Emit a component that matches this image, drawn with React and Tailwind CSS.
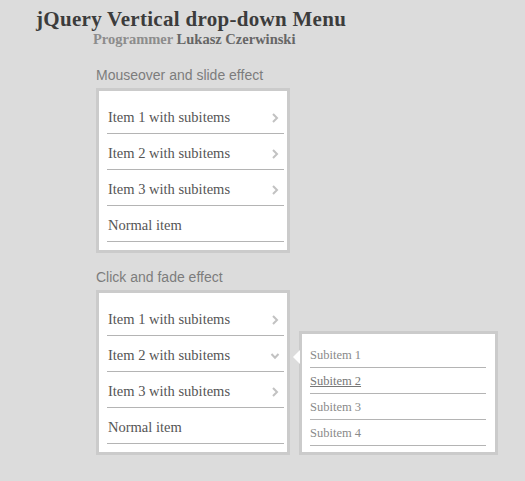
import React from 'react';

const serif = { fontFamily: '"Liberation Serif", "Times New Roman", serif' };
const sans = { fontFamily: '"Liberation Sans", Arial, sans-serif' };

const Chevron = ({ down = false }) => (
    <svg width="10" height="10" viewBox="0 0 10 10" className="shrink-0">
        {down ? (
            <polyline points="1.5,3 5,6.8 8.5,3" fill="none" stroke="#c2c2c2" strokeWidth="2" />
        ) : (
            <polyline points="3,1 7,5 3,9" fill="none" stroke="#c2c2c2" strokeWidth="2" />
        )}
    </svg>
);

const MenuItem = ({ label, icon }) => (
    <li className="flex items-center justify-between h-[36px] pt-[5px] border-b border-[#b4b4b4] pl-[1px] pr-[4px]">
        <span className="text-[14.5px] text-[#555]" style={serif}>{label}</span>
        {icon && <Chevron down={icon === 'down'} />}
    </li>
);

const Menu = ({ openSecond = false }) => (
    <div className="w-[194px] border-[3px] border-[#cbcbcb] bg-white">
        <ul className="pt-[7px] pb-[8px] pl-[8px] pr-[3px]">
            <MenuItem label="Item 1 with subitems" icon="right" />
            <MenuItem label="Item 2 with subitems" icon={openSecond ? 'down' : 'right'} />
            <MenuItem label="Item 3 with subitems" icon="right" />
            <MenuItem label="Normal item" />
        </ul>
    </div>
);

const SubMenu = () => (
    <div className="relative w-[199px] border-[3px] border-[#cbcbcb] bg-white">
        <div className="absolute left-[-9px] top-[16px] w-0 h-0 border-y-[7px] border-y-transparent border-r-[7px] border-r-white" />
        <ul className="pt-[8px] pb-[6px] pl-[8px] pr-[9px]">
            {['Subitem 1', 'Subitem 2', 'Subitem 3', 'Subitem 4'].map((s, i) => (
                <li key={s} className="flex items-center h-[26px] pt-[2px] border-b border-[#b4b4b4]">
                    <span
                        className={`text-[12.5px] ${i === 1 ? 'text-[#777] underline' : 'text-[#8a8a8a]'}`}
                        style={serif}
                    >
                        {s}
                    </span>
                </li>
            ))}
        </ul>
    </div>
);

const App = () => (
    <div className="min-h-[481px] w-full bg-[#dcdcdc] pt-[7px]">
        <div className="pl-[36px]">
            <h1 className="text-[21px] leading-[24px] tracking-[0.3px] font-bold text-[#3c3c3c]" style={serif}>
                jQuery Vertical drop-down Menu
            </h1>
            <div className="pl-[57px] text-[14.5px] leading-[16px] font-bold" style={serif}>
                <span className="text-[#8c8c8c]">Programmer </span>
                <span className="text-[#666]">Lukasz Czerwinski</span>
            </div>
        </div>

        <div className="pl-[96px] pt-[19px]">
            <div className="text-[14px] leading-[18px] text-[#7c7c7c] mb-[4px]" style={sans}>
                Mouseover and slide effect
            </div>
            <Menu />

            <div className="text-[14px] leading-[18px] text-[#7c7c7c] mt-[15px] mb-[4px]" style={sans}>
                Click and fade effect
            </div>
            <div className="flex items-start gap-[9px]">
                <Menu openSecond />
                <div className="mt-[41px]">
                    <SubMenu />
                </div>
            </div>
        </div>
    </div>
);

export default App;
